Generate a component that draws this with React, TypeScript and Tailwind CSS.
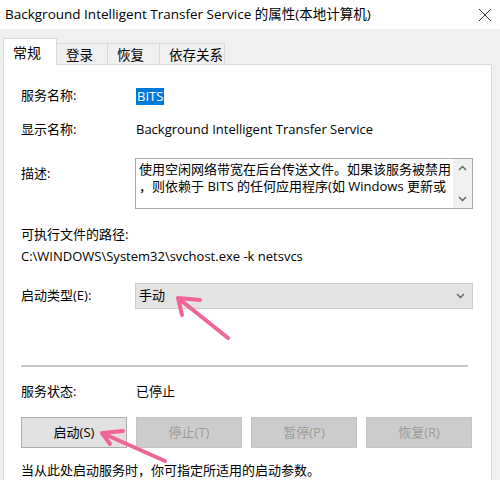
import React from 'react';

const FONT = "font-['Segoe_UI','Open_Sans','Noto_Sans_CJK_SC',sans-serif]";

const Chevron = ({ up = false }: { up?: boolean }) => (
  <svg width="9" height="6" viewBox="0 0 9 6" className="block">
    <path
      d={up ? 'M1 5 L4.5 1.5 L8 5' : 'M1 1 L4.5 4.5 L8 1'}
      fill="none"
      stroke="#5f5f5f"
      strokeWidth="1.3"
    />
  </svg>
);

const Arrow = ({ d }: { d: string }) => (
  <path d={d} fill="none" stroke="#f06598" strokeWidth="4" strokeLinecap="round" strokeLinejoin="round" />
);

const Tab = ({ label, w, active = false }: { label: string; w: string; active?: boolean }) =>
  active ? (
    <div className={`relative z-10 -mb-px h-[27px] ${w} border border-b-0 border-[#d9d9d9] bg-white pl-[9px] pt-[3px] text-[14px] text-black`}>
      {label}
    </div>
  ) : (
    <div className={`mt-[6px] h-[21px] ${w} border border-b-0 border-l-0 border-[#d9d9d9] bg-[#f0f0f0] pl-[9px] pt-[1px] text-[13.5px] text-black`}>
      {label}
    </div>
  );

const Btn = ({ label, disabled = false }: { label: string; disabled?: boolean }) => (
  <div
    className={`flex h-[31px] w-[106px] items-center justify-center border text-[13px] ${
      disabled ? 'border-[#c4c4c4] bg-[#cccccc] text-[#9c9c9c]' : 'border-[#adadad] bg-[#e1e1e1] text-black'
    }`}
  >
    {label}
  </div>
);

export default function App() {
  return (
    <div className={`relative h-[480px] w-[500px] overflow-hidden bg-[#f0f0f0] ${FONT}`}>
      {/* Title bar */}
      <div className="flex h-[29px] items-center justify-between bg-white pl-[5px] pr-[8px]">
        <span className="text-[13.5px] text-black">Background Intelligent Transfer Service 的属性(本地计算机)</span>
        <svg width="14" height="14" viewBox="0 0 14 14">
          <path d="M1 1 L13 13 M13 1 L1 13" stroke="#333" strokeWidth="1" />
        </svg>
      </div>

      {/* Tabs */}
      <div className="flex h-[35px] items-end pl-[3px]">
        <Tab label="常规" w="w-[54px]" active />
        <Tab label="登录" w="w-[51px]" />
        <Tab label="恢复" w="w-[52px]" />
        <Tab label="依存关系" w="w-[65px]" />
      </div>

      {/* Panel */}
      <div className="ml-[3px] h-[420px] w-[489px] border-t border-l border-r border-[#d9d9d9] bg-white pl-[17px] text-[13px] text-black">
        <div className="mt-[21px] flex h-[20px] items-center">
          <span className="w-[115px]">服务名称:</span>
          <span className="bg-[#0078d7] px-[1px] leading-[17px] text-white">BITS</span>
        </div>
        <div className="mt-[14px] flex h-[20px] items-center">
          <span className="w-[115px]">显示名称:</span>
          <span>Background Intelligent Transfer Service</span>
        </div>
        <div className="mt-[18px] flex">
          <span className="w-[114px] pt-[6px]">描述:</span>
          <div className="flex h-[51px] w-[338px] border border-[#a8a8a8]">
            <div className="flex-1 overflow-hidden whitespace-nowrap pl-[3px] pt-[2px] leading-[17px]">
              使用空闲网络带宽在后台传送文件。如果该服务被禁用
              <br />
              ，则依赖于 BITS 的任何应用程序(如 Windows 更新或
            </div>
            <div className="flex w-[19px] flex-col items-center justify-between bg-[#f0f0f0] py-[6px]">
              <Chevron up />
              <Chevron />
            </div>
          </div>
        </div>
        <div className="mt-[16px] flex h-[20px] items-center">可执行文件的路径:</div>
        <div className="mt-[2px] flex h-[20px] items-center">C:\WINDOWS\System32\svchost.exe -k netsvcs</div>
        <div className="mt-[16px] flex items-center">
          <span className="w-[114px]">启动类型(E):</span>
          <div className="flex h-[26px] w-[338px] items-center justify-between border border-[#cccccc] bg-[#e3e3e3] pl-[3px] pr-[7px]">
            <span>手动</span>
            <Chevron />
          </div>
        </div>
        <div className="mt-[56px] h-[2px] w-[447px] bg-[#c6c6c6]" />
        <div className="mt-[15px] flex h-[20px] items-center">
          <span className="w-[115px]">服务状态:</span>
          <span>已停止</span>
        </div>
        <div className="mt-[15px] flex gap-[9px]">
          <Btn label="启动(S)" />
          <Btn label="停止(T)" disabled />
          <Btn label="暂停(P)" disabled />
          <Btn label="恢复(R)" disabled />
        </div>
        <div className="mt-[13px] flex h-[20px] items-center">当从此处启动服务时，你可指定所适用的启动参数。</div>
      </div>

      {/* Annotation arrows */}
      <svg className="pointer-events-none absolute left-0 top-0" width="500" height="480">
        <Arrow d="M228 338 L178 298 M178 298 L200 300 M178 298 L182 315" />
        <Arrow d="M165 461 L102 433 M102 433 L123 431 M102 433 L110 444" />
      </svg>
    </div>
  );
}
